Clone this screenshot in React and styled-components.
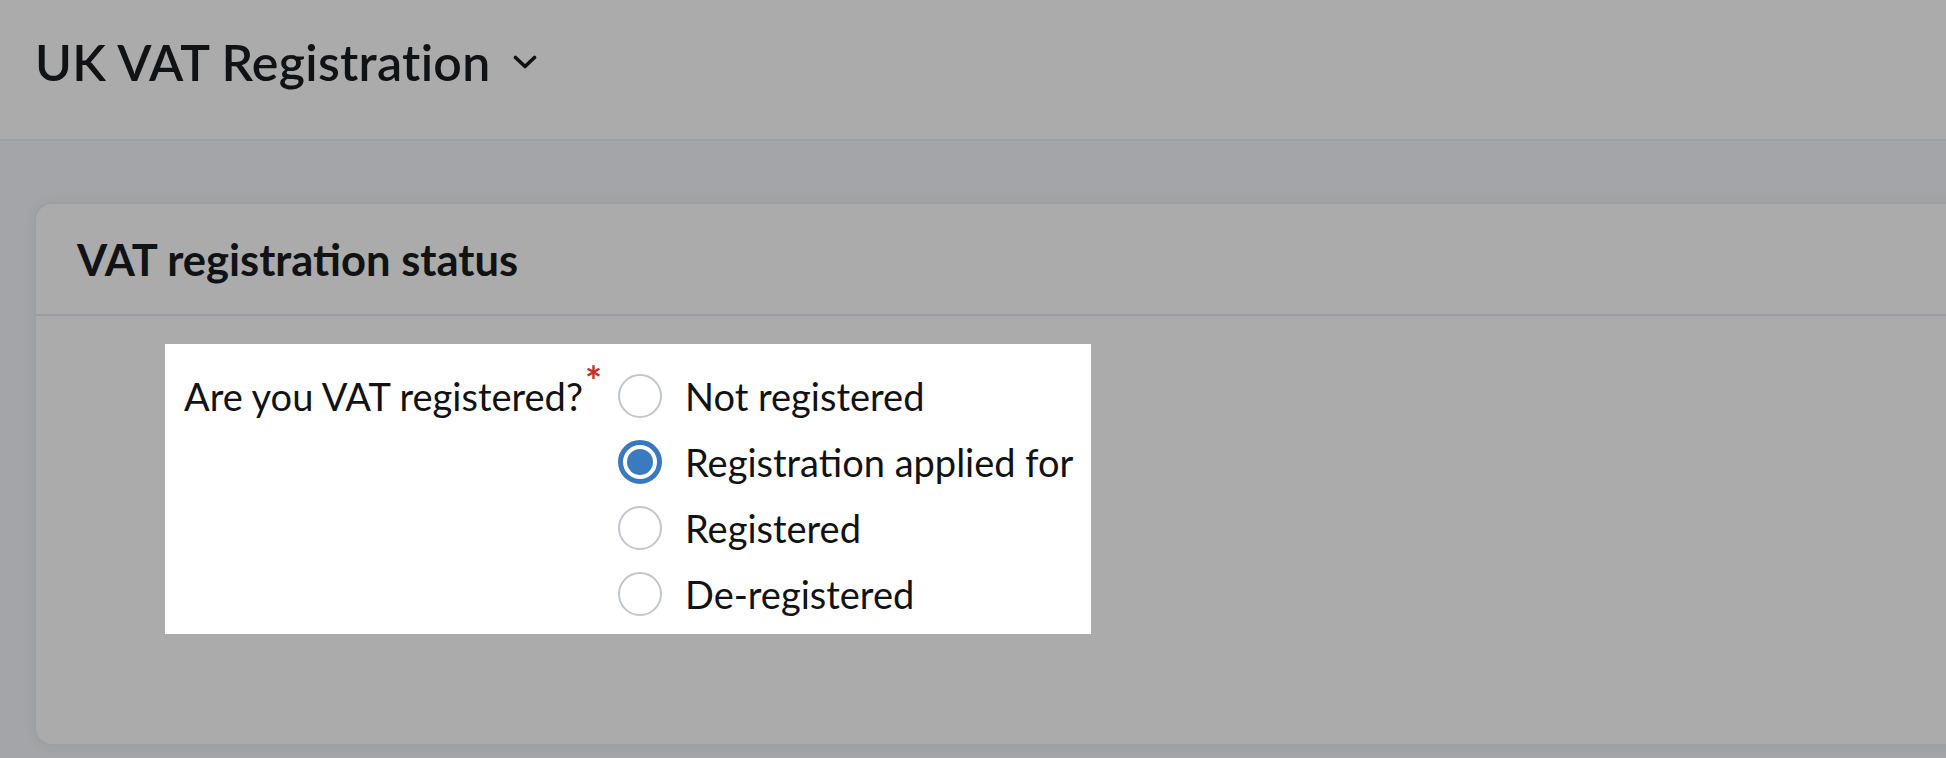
import React, { useState } from 'react';
import styled, { createGlobalStyle } from 'styled-components';

const GlobalStyle = createGlobalStyle`
  html, body {
    margin: 0;
    padding: 0;
    background: #a4a5a9;
    font-family: Lato, "Noto Sans", sans-serif;
    color: #111214;
    overflow: hidden;
  }
`;

const Page = styled.div`
  width: 1946px;
  height: 758px;
  display: flex;
  flex-direction: column;
  overflow: hidden;
`;

const Header = styled.header`
  height: 141px;
  box-sizing: border-box;
  flex-shrink: 0;
  display: flex;
  align-items: center;
  gap: 22px;
  padding: 0 0 16px 35px;
  background: #ababab;
  border-bottom: 2px solid #9d9ea2;
`;

const Title = styled.h1`
  margin: 0;
  font-size: 50px;
  font-weight: 600;
  letter-spacing: 0.3px;
`;

const Content = styled.main`
  flex: 1;
  padding: 61px 0 0 34px;
`;

const Card = styled.section`
  width: 2000px;
  height: 544px;
  box-sizing: border-box;
  background: #ababab;
  border: 2px solid #9e9fa3;
  border-radius: 18px;
  box-shadow: 0 0 14px rgba(0, 0, 0, 0.05);
`;

const CardHeader = styled.div`
  height: 110px;
  display: flex;
  align-items: center;
  padding-left: 41px;
  border-bottom: 2px solid #9c9da1;
`;

const CardTitle = styled.h2`
  margin: 0;
  font-size: 43.5px;
  font-weight: 700;
`;

const CardBody = styled.div`
  padding: 28px 0 0 129px;
`;

const Spotlight = styled.div`
  display: inline-flex;
  align-items: flex-start;
  background: #fff;
  padding: 19px 18px 7px 19px;
`;

const Label = styled.div`
  font-size: 38px;
  line-height: 66px;
  width: 434px;
  white-space: nowrap;
`;

const Required = styled.sup`
  color: #c8312b;
  font-size: 40px;
  font-weight: 700;
  line-height: 1;
  vertical-align: top;
  position: relative;
  top: -2px;
  margin-left: 2px;
`;

const Options = styled.div`
  display: flex;
  flex-direction: column;
`;

const Option = styled.label`
  display: flex;
  align-items: center;
  gap: 23px;
  height: 66px;
  font-size: 38px;
  cursor: pointer;
`;

const Radio = styled.span`
  width: 44px;
  height: 44px;
  box-sizing: border-box;
  border-radius: 50%;
  flex-shrink: 0;
  background: #fff;
  border: ${p => (p.checked ? '5px solid #3b78c2' : '2px solid #c2c5ca')};
  display: flex;
  align-items: center;
  justify-content: center;

  &::after {
    content: '';
    display: ${p => (p.checked ? 'block' : 'none')};
    width: 26px;
    height: 26px;
    border-radius: 50%;
    background: #3a7bbf;
  }
`;

const Chevron = () => (
  <svg width="24" height="14" viewBox="0 0 24 14" fill="none">
    <path d="M2.5 2.5 12 11.5l9.5-9" stroke="#111214" strokeWidth="3.6" strokeLinecap="round" strokeLinejoin="round" />
  </svg>
);

const options = ['Not registered', 'Registration applied for', 'Registered', 'De-registered'];

export default function App() {
  const [status, setStatus] = useState('Registration applied for');
  return (
    <Page>
      <GlobalStyle />
      <Header>
        <Title>UK VAT Registration</Title>
        <Chevron />
      </Header>
      <Content>
        <Card>
          <CardHeader>
            <CardTitle>VAT registration status</CardTitle>
          </CardHeader>
          <CardBody>
            <Spotlight>
              <Label>
                Are you VAT registered?<Required>*</Required>
              </Label>
              <Options>
                {options.map(o => (
                  <Option key={o} onClick={() => setStatus(o)}>
                    <Radio checked={status === o} />
                    {o}
                  </Option>
                ))}
              </Options>
            </Spotlight>
          </CardBody>
        </Card>
      </Content>
    </Page>
  );
}
